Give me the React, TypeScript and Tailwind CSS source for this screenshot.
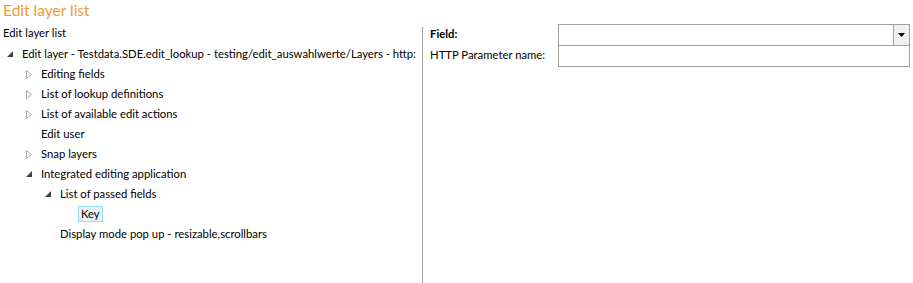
const font = "font-['Segoe_UI','Lato',sans-serif]";

type Node = { label: string; level: number; expander?: "open" | "closed"; selected?: boolean };

const nodes: Node[] = [
  { label: "Edit layer - Testdata.SDE.edit_lookup - testing/edit_auswahlwerte/Layers - http:", level: 0, expander: "open" },
  { label: "Editing fields", level: 1, expander: "closed" },
  { label: "List of lookup definitions", level: 1, expander: "closed" },
  { label: "List of available edit actions", level: 1, expander: "closed" },
  { label: "Edit user", level: 1 },
  { label: "Snap layers", level: 1, expander: "closed" },
  { label: "Integrated editing application", level: 1, expander: "open" },
  { label: "List of passed fields", level: 2, expander: "open" },
  { label: "Key", level: 3, selected: true },
  { label: "Display mode pop up - resizable,scrollbars", level: 2 },
];

function Expander({ kind }: { kind?: "open" | "closed" }) {
  if (kind === "open")
    return (
      <svg width="6" height="6" viewBox="0 0 6 6" className="shrink-0">
        <path d="M6 0 L6 6 L0 6 Z" fill="#404040" />
      </svg>
    );
  if (kind === "closed")
    return (
      <svg width="6" height="9" viewBox="0 0 6 9" className="shrink-0">
        <path d="M0.5 0.5 L5.5 4.5 L0.5 8.5 Z" fill="none" stroke="#a6a6a6" strokeWidth="1" />
      </svg>
    );
  return null;
}

function TreeRow({ node }: { node: Node }) {
  const indent = ["pl-[7px]", "pl-[26px]", "pl-[45px]", "pl-[64px]"][node.level];
  return (
    <div className={`flex h-5 items-center whitespace-nowrap ${indent}`}>
      <div className="flex w-[15px] shrink-0 items-center">
        <Expander kind={node.expander} />
      </div>
      {node.selected ? (
        <span className="ml-[-1px] border border-[#99d9f8] bg-[#e5f3fb] px-[2px] leading-[14px]">{node.label}</span>
      ) : (
        <span>{node.label}</span>
      )}
    </div>
  );
}

export default function App() {
  return (
    <div className={`h-[283px] w-[913px] overflow-hidden bg-white text-[11.3px] text-black ${font}`}>
      <h1 className="h-[22px] pl-[3px] text-[15.5px] leading-[21px] text-[#ee9a33]">Edit layer list</h1>
      <div className="flex h-[261px]">
        <div className="w-[422px] shrink-0 overflow-hidden">
          <div className="h-5 pl-[3px] pt-px leading-[20px]">Edit layer list</div>
          <div className="pt-[2px]">
            {nodes.map((n) => (
              <TreeRow key={n.label} node={n} />
            ))}
          </div>
        </div>
        <div className="mt-[5px] w-px shrink-0 bg-[#a0a0a0]" />
        <div className="flex flex-1 flex-col pl-[7px] pt-[2px]">
          <div className="flex h-[21px] items-center">
            <span className="w-[128px] shrink-0 whitespace-nowrap font-bold">Field:</span>
            <div className="flex h-[22px] w-[352px] items-stretch border border-[#a0a0a0]">
              <div className="flex-1" />
              <div className="flex w-[16px] items-center justify-center border-l border-[#a0a0a0] bg-[#f0f0f0]">
                <svg width="7" height="4" viewBox="0 0 7 4">
                  <path d="M0 0 H7 L3.5 4 Z" fill="#000" />
                </svg>
              </div>
            </div>
          </div>
          <div className="flex h-[21px] items-center">
            <span className="w-[128px] shrink-0 whitespace-nowrap">HTTP Parameter name:</span>
            <div className="h-[22px] w-[352px] border border-t-0 border-[#a0a0a0]" />
          </div>
        </div>
      </div>
    </div>
  );
}
